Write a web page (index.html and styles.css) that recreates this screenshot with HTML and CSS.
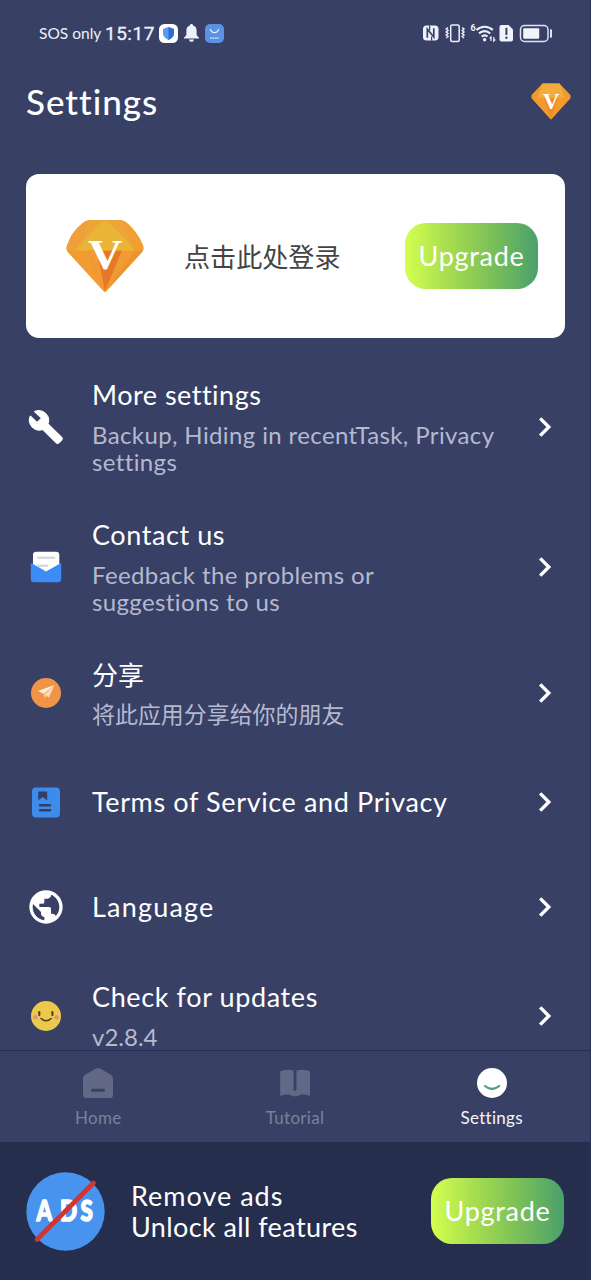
FILE: index.html
```html
<!DOCTYPE html>
<html lang="en">
<head>
<meta charset="utf-8">
<title>Settings</title>
<link rel="stylesheet" href="styles.css">
</head>
<body>
<svg class="defs" width="0" height="0">
  <symbol id="chevron" viewBox="0 0 14 20"><path d="M2.200 1.400 10.800 10 2.200 18.600" fill="none" stroke="#fff" stroke-width="3.400"/></symbol>
</svg>
<div class="screen">
  <div class="status">
    <span class="carrier">SOS only</span><span class="clock">15:17</span>
    <svg class="st-shield" width="19" height="19" viewBox="0 0 19 19"><rect width="19" height="19" rx="5.5" fill="#fff"/><path d="M9.5 3 15 5v4.500c0 3-2.400 5-5.500 6.500C6.400 14.500 4 12.500 4 9.500V5z" fill="#5e9af0"/><path d="M9.500 3 15 5v4.500c0 3-2.400 5-5.500 6.500z" fill="#2f6bd8"/></svg>
    <svg class="st-bell" width="15" height="18" viewBox="0 0 15 18"><path d="M7.500 0c1 0 1.600.700 1.600 1.600 2.400.700 3.500 2.600 3.500 5v4.400L15 13.800v.700H0v-.700L2.400 11V6.600c0-2.400 1.100-4.300 3.500-5C5.900.700 6.500 0 7.500 0zM5 15.500h5c-.3 1.400-1.300 2.300-2.500 2.300S5.300 16.900 5 15.500z" fill="#eef0fa"/></svg>
    <svg class="st-bag" width="19" height="19" viewBox="0 0 19 19"><rect width="19" height="19" rx="5" fill="#5a92e6"/><path d="M5.200 5c.8 2.400 2.300 3.600 4.300 3.600S13 7.400 13.800 5" fill="none" stroke="#e6f0ff" stroke-width="1.200"/><path d="M5 14.200h9" stroke="#cfe2ff" stroke-width="1.300" stroke-dasharray="2 .5"/></svg>
    <span class="spacer"></span>
    <svg width="130" height="22" viewBox="0 0 130 22">
      <rect x="1" y="3.500" width="15.500" height="15" rx="3.500" fill="#eef0fa"/>
      <path d="M5.300 15.800V7.200L11.800 15V6.200" fill="none" stroke="#384066" stroke-width="1.700"/><path d="M7.600 3.500v5M9.600 18.500v-4" stroke="#384066" stroke-width="1.200"/>
      <g fill="none" stroke="#eef0fa" stroke-width="1.500"><rect x="28.700" y="3" width="8.500" height="16.500" rx="1.500"/>
      <path d="M26 5.500 24.200 7l1.800 1.500-1.800 1.500 1.800 1.500-1.800 1.500 1.800 1.500-1.800 1.500M40.200 5.500 42 7l-1.800 1.500 1.800 1.500-1.800 1.500 1.800 1.500-1.800 1.500 1.800 1.500"/></g>
      <text x="48.500" y="9" class="tiny">6</text>
      <g fill="none" stroke="#eef0fa" stroke-width="2.100"><path d="M54.500 8c4.600-4.300 11.800-4.300 16.300 0M57 11.400c3.300-3 8-3 11.200 0M59.700 14.600c1.800-1.500 4.200-1.500 5.800 0"/></g>
      <circle cx="62.600" cy="17.800" r="1.700" fill="#eef0fa"/><path d="M69 19v-4l-1.300 1.500M71.800 15v4l1.500-1.500" fill="none" stroke="#eef0fa" stroke-width="1.200"/>
      <path d="M79.500 3H86.500l4.500 4.500V17.500q0 2-2 2h-9.500q-2 0-2-2V5q0-2 2-2z" fill="#f2f4fc"/><path d="M84.400 5.800v7.200" stroke="#384066" stroke-width="2"/><circle cx="84.400" cy="15.800" r="1.200" fill="#384066"/>
      <rect x="98.500" y="3.500" width="27.500" height="16" rx="4" fill="none" stroke="#dfe2f2" stroke-width="1.500"/><rect x="101.200" y="6.200" width="16" height="10.600" rx="1" fill="#f2f4fc"/><rect x="128" y="7.300" width="2" height="8.500" rx=".8" fill="#dfe2f2"/>
    </svg>
  </div>

  <header class="header">
    <h1>Settings</h1>
    <svg width="40" height="37" viewBox="0 0 40 37">
      <path d="M11.500.500h17L39.500 12v3L20 36.500.500 15v-3z" fill="#f09a2c"/><path d="M11.500.500h17l5.500 15H6z" fill="#f2ac3a"/><path d="M.5 15h39L20 36.500z" fill="#f39a2b"/><path d="M13 15h14l-7 21z" fill="#ed8c28"/>
      <text x="20" y="25.500" class="gem-v small">V</text>
    </svg>
  </header>

  <section class="account">
    <svg width="78" height="72" viewBox="0 0 234 216">
      <path d="M70 0H164Q173 0 183 8 215 36 231 75 236 88 228 97L122 213Q117 217 112 213L6 97Q-2 88 3 75 19 36 51 8 61 0 70 0Z" fill="#f19e32"/>
      <path d="M67 0H167L207 92H27Z" fill="#eda439"/><path d="M117 0 66 45 27 92H207L168 45Z" fill="#eab536"/>
      <path d="M3 92H66L117 216Z" fill="#f19b32"/><path d="M66 92H168L117 216Z" fill="#e67928"/><path d="M92 92H66L117 216Z" fill="#f19b32"/><path d="M207 92H231L117 216Z" fill="#ea942e"/><path d="M168 92H207L117 216Z" fill="#f19b32"/><path d="M51 8 66 45 27 92 3 86Q8 40 51 8Z" fill="#efa03a"/>
      <text x="66" y="147" class="gem-v big" textLength="103" lengthAdjust="spacingAndGlyphs">V</text>
    </svg>
    <span class="login">点击此处登录</span>
    <button class="upgrade">Upgrade</button>
  </section>

  <main class="list">
    <div class="row two">
      <svg class="icon" width="36" height="36" viewBox="0 0 24 24"><path fill="#fff" stroke="#fff" stroke-width=".7" stroke-linejoin="round" d="M22.300 18.700l-9-8.800c.9-2.300.4-5-1.500-6.900-2-2-5-2.400-7.400-1.300L9 6 6 9 1.600 4.700C.4 7.100.9 10.100 2.900 12.100c1.900 1.900 4.600 2.400 6.900 1.500l8.900 8.900c.6.6 1.400.6 2 0l1.600-1.600c.7-.7.7-1.500 0-2.200z"/></svg>
      <div class="copy"><div class="name">More settings</div><div class="note">Backup, Hiding in recentTask, Privacy<br>settings</div></div>
      <svg class="chev"><use href="#chevron"/></svg>
    </div>
    <div class="row two">
      <svg class="icon" width="32" height="32" viewBox="0 0 32 32"><path d="M.8 12.500H31.200V28q0 3.200-3.200 3.200H4Q.8 31.200.8 28z" fill="#3d8bf6"/><path d="M3 4Q3 .7 6.300.7H26Q29.300.7 29.300 4V13L16 20.500 3 13z" fill="#fff"/><path d="M8 6.800H24M8 14.700H17" stroke="#d8dae2" stroke-width="2.600" stroke-linecap="round"/></svg>
      <div class="copy"><div class="name contact">Contact us</div><div class="note feedback">Feedback the problems or<br>suggestions to us</div></div>
      <svg class="chev"><use href="#chevron"/></svg>
    </div>
    <div class="row one">
      <svg class="icon" width="32" height="32" viewBox="0 0 32 32"><circle cx="16" cy="16" r="15" fill="#f09548"/><path d="M24.300 8 8 14l5.500 2.800z" fill="#fff2dc"/><path d="M24.300 8 13.500 16.800l1 4.600 2.200-2.600z" fill="#f6c08c"/><path d="M24.300 8 15 18l4 2.600z" fill="#fbdcb8"/></svg>
      <div class="copy share"><div class="name cjk">分享</div><div class="note cjk">将此应用分享给你的朋友</div></div>
      <svg class="chev"><use href="#chevron"/></svg>
    </div>
    <div class="row single">
      <svg class="icon" width="28" height="31" viewBox="0 0 28 31"><rect y=".5" width="28" height="30" rx="4" fill="#3d8bea"/><path d="M6.300 4.500H15.200V13.200L10.700 10 6.300 13.200z" fill="#343d62"/><path d="M8 18.200H18M8 23.300H18" stroke="#343d62" stroke-width="2.500" stroke-linecap="round"/></svg>
      <div class="copy"><div class="name terms">Terms of Service and Privacy</div></div>
      <svg class="chev"><use href="#chevron"/></svg>
    </div>
    <div class="row single">
      <svg class="icon" width="40" height="40" viewBox="0 0 24 24"><path fill="#fff" d="M12 2C6.480 2 2 6.480 2 12s4.480 10 10 10 10-4.480 10-10S17.520 2 12 2zm-1 17.930c-3.950-.49-7-3.850-7-7.930 0-.62.08-1.210.21-1.790L9 15v1c0 1.100.9 2 2 2v1.930zm6.900-2.540c-.26-.81-1-1.390-1.900-1.390h-1v-3c0-.55-.45-1-1-1H8v-2h2c.55 0 1-.45 1-1V7h2c1.100 0 2-.9 2-2v-.41c2.930 1.190 5 4.060 5 7.410 0 2.080-.8 3.970-2.100 5.390z"/></svg>
      <div class="copy"><div class="name language">Language</div></div>
      <svg class="chev"><use href="#chevron"/></svg>
    </div>
    <div class="row one last">
      <svg class="icon" width="32" height="32" viewBox="0 0 32 32"><circle cx="16" cy="16" r="15" fill="#ebca4b"/><circle cx="5.500" cy="17.300" r="2.300" fill="#e8918b"/><circle cx="26.500" cy="17.300" r="2.300" fill="#e8918b"/><path d="M9.300 12v3M22.400 12v3" stroke="#4d3b22" stroke-width="2.100" stroke-linecap="round"/><path d="M11 18.500q5 4.600 10.200 0" fill="none" stroke="#4d3b22" stroke-width="1.500" stroke-linecap="round"/></svg>
      <div class="copy"><div class="name updates">Check for updates</div><div class="note version">v2.8.4</div></div>
      <svg class="chev"><use href="#chevron"/></svg>
    </div>
  </main>

  <nav class="tabs">
    <div class="tab">
      <svg width="32" height="32" viewBox="0 0 32 32"><path d="M13.500 1.800q2.500-1.500 5 0l10 5.600Q31 8.800 31 11.500V28q0 3-3 3H4q-3 0-3-3V11.500Q1 8.800 3.500 7.400z" fill="#626987"/><path d="M10.500 23.300H21.500" stroke="#384066" stroke-width="3" stroke-linecap="round"/></svg>
      <span>Home</span>
    </div>
    <div class="tab">
      <svg width="32" height="32" viewBox="0 0 32 32"><path d="M1.200 5.500Q1.200 4 2.700 3.700 8 2 14.500 3.600V22.500q0 1.500 1.500 1.500t1.500-1.500V3.600Q24 2 29.500 3.700 31 4 31 5.500V29q-3-1.700-7-1.500-3 0-4.500 1.200-3.500 1-7 0Q11 27.500 8 27.500 4 27.300 1.200 29z" fill="#626987"/></svg>
      <span>Tutorial</span>
    </div>
    <div class="tab active">
      <svg width="32" height="32" viewBox="0 0 32 32"><circle cx="16" cy="16" r="15" fill="#fff"/><path d="M9 19q7 6 14.200 0" fill="none" stroke="#4f9d8b" stroke-width="2.200" stroke-linecap="round"/></svg>
      <span>Settings</span>
    </div>
  </nav>

  <footer class="promo">
    <svg width="79" height="79" viewBox="0 0 79 79"><circle cx="39.500" cy="39.500" r="39.200" fill="#4793ee"/><text class="ads" transform="scale(.8 1)" y="49.300" x="13 42.500 68">ADS</text><path d="M11 67.500 67.500 11" stroke="#d3342f" stroke-width="4.600" stroke-linecap="round"/></svg>
    <div class="pitch"><div class="remove">Remove ads</div><div class="unlock">Unlock all features</div></div>
    <button class="upgrade">Upgrade</button>
  </footer>
</div>
</body>
</html>
```

FILE: styles.css
```css
* { box-sizing: border-box; }
body { margin: 0; background: #384066; font-family: Lato, "Noto Sans CJK SC", sans-serif; color: #fff; }
svg { display: block; flex: none; }
.defs { position: absolute; }
.screen { width: 591px; height: 1280px; display: flex; flex-direction: column; overflow: hidden; background: #384066; border-right: 1px solid #2b3358; white-space: nowrap; }

.status { height: 66px; padding: 0 38px 0 39px; display: flex; align-items: center; color: #eef0fa; }
.carrier { width: 66px; font-size: 15.5px; }
.clock { width: 54px; font: 400 19px/24px Roboto, sans-serif; letter-spacing: .5px; -webkit-text-stroke: .3px #eef0fa; padding-top: 1px; }
.st-bell { margin-left: 6px; }
.st-bag { margin-left: 6px; }
.spacer { flex: 1; }
.tiny { font: 700 9px Roboto, sans-serif; fill: #eef0fa; }

.header { height: 108px; padding: 0 19px 38px 26px; display: flex; align-items: center; justify-content: space-between; }
h1 { margin: 0; font-size: 35px; line-height: 42px; font-weight: 500; letter-spacing: 1px; }
.gem-v { font: 700 128px "Liberation Serif", serif; fill: #fff; }
.gem-v.small { font-size: 23px; text-anchor: middle; }

.account { height: 164px; flex: none; margin: 0 25px 0 26px; padding: 0 27px 0 40px; background: #fff; border-radius: 13px; display: flex; align-items: center; }
.login { margin: -1px 0 0 40px; flex: 1; color: #444; font: 26.1px/36px "Noto Sans CJK SC", sans-serif; }
.upgrade { width: 133px; height: 66px; flex: none; padding: 0; border: 0; border-radius: 21px; background: linear-gradient(90deg, #d3ff4f, #a2da50 36%, #7ac058 66%, #4aa06c); color: #fff; font: 27px/32px Lato, sans-serif; letter-spacing: .7px; }

.list { height: 713px; flex: none; padding-top: 19.500px; overflow: hidden; border-bottom: 1px solid #252e50; }
.row { display: flex; align-items: center; padding-right: 38px; }
.row.two { height: 139.500px; }
.row.one { height: 113px; }
.row.single { height: 105.250px; }
.row.last { margin-top: -1px; }
.icon { width: 92px; }
.copy { flex: 1; margin-top: 0; }
.single .copy { margin-top: -2px; }
.copy.share { margin-top: -2px; }
.name { font-size: 27px; line-height: 31px; letter-spacing: .5px; }
.contact { letter-spacing: .58px; }
.terms { letter-spacing: .63px; }
.language { letter-spacing: 1.200px; }
.updates { letter-spacing: .62px; }
.note { margin-top: 11px; font-size: 24px; line-height: 27px; letter-spacing: .38px; color: #b5b9d0; }
.name.cjk { font: 26px/31px "Noto Sans CJK SC", sans-serif; letter-spacing: 0; }
.note.cjk { font: 22.950px/27px "Noto Sans CJK SC", sans-serif; letter-spacing: 0; }
.note.version { margin: 13px 0 2px; line-height: 23px; letter-spacing: 0; }
.chev { width: 14px; height: 20px; }

.tabs { height: 91px; flex: none; display: flex; justify-content: space-between; }
.tab { width: 196.600px; padding-top: 16px; display: flex; flex-direction: column; align-items: center; gap: 8px; color: #7b819d; font-size: 17px; line-height: 22px; letter-spacing: .3px; }
.tab.active { color: #f4f5fb; }

.promo { flex: 1; margin-right: -1px; background: #252e4d; display: flex; align-items: center; padding: 0 27px 0 26px; }
.pitch { flex: 1; margin-left: 26px; font-size: 27px; line-height: 31px; }
.remove { letter-spacing: 1px; }
.unlock { letter-spacing: .4px; }
.ads { font: 900 28px Lato, sans-serif; fill: #fff; stroke: #fff; stroke-width: 1.500px; stroke-linejoin: round; }
```
